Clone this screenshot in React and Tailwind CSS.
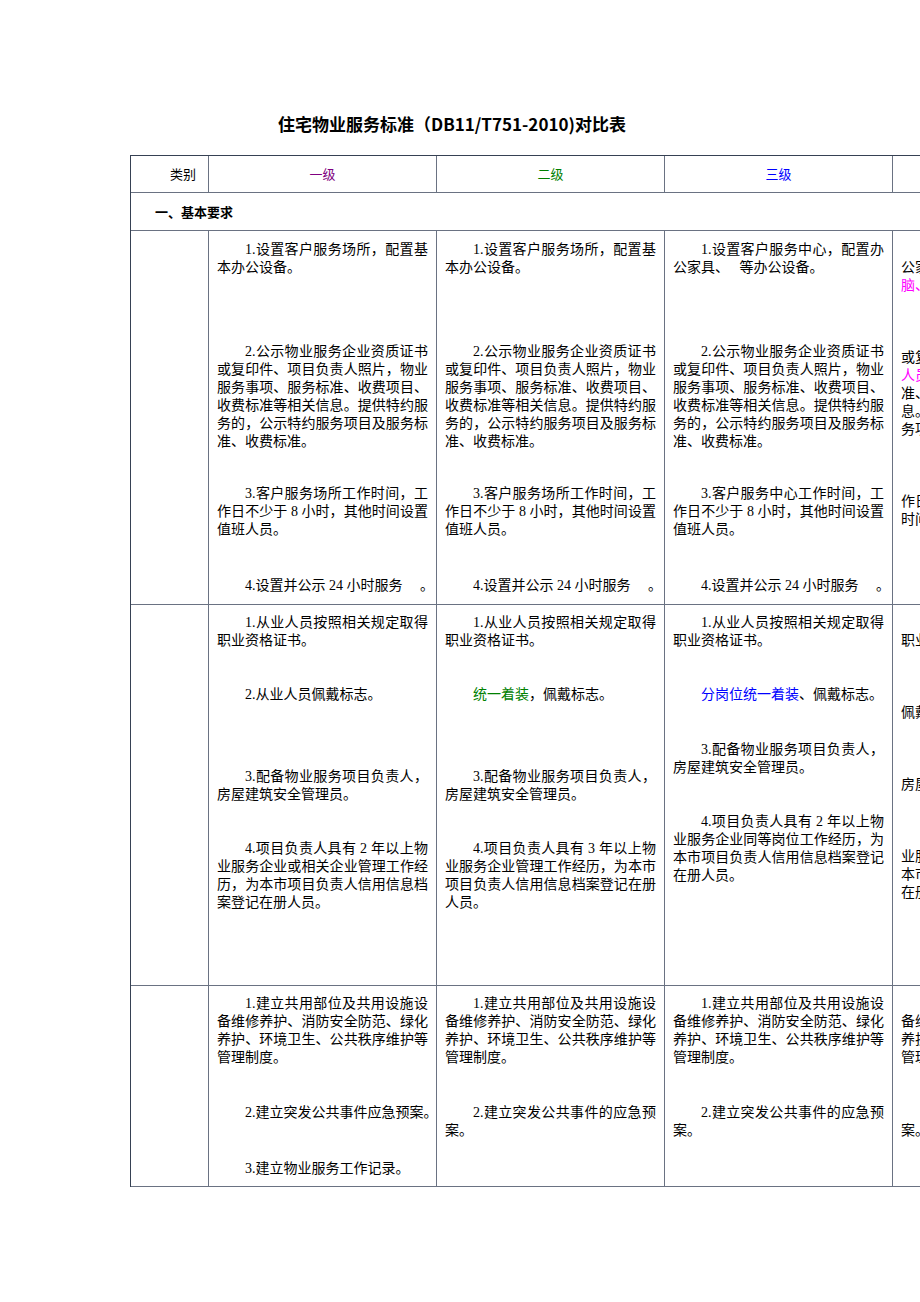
const serif = { fontFamily: '"Liberation Serif", "Noto Sans CJK SC", serif' };

function P({ mt, children, nowrap = false }) {
  return (
    <p className={`indent-[28px] text-justify ${nowrap ? 'whitespace-nowrap' : ''}`} style={{ marginTop: mt }}>
      {children}
    </p>
  );
}

function Lines({ mt, lines }) {
  return (
    <div style={{ marginTop: mt }}>
      {lines.map((l, i) => (
        <div key={i} className={`whitespace-nowrap h-[18px] ${i === 0 ? 'indent-[28px]' : ''}`}>{l || '\u00a0'}</div>
      ))}
    </div>
  );
}

function Row({ h, cells }) {
  return (
    <div className="flex border-b border-gray-500" style={{ height: h }}>
      <div className="w-[78px] shrink-0 border-r border-gray-500" />
      {cells.map((c, i) => (
        <div key={i} className="w-[228px] shrink-0 border-r border-gray-500 px-[8px] text-[14px] leading-[18px] text-black overflow-hidden" style={serif}>
          {c}
        </div>
      ))}
    </div>
  );
}

const pink = 'text-[#ff00ff]';

export default function App() {
  return (
    <div className="w-[920px] h-[1302px] overflow-hidden bg-white" style={{ fontFamily: '"Noto Sans CJK SC", sans-serif' }}>
      <h1 className="pt-[112px] pl-[278px] text-[17px] leading-[24px] font-bold text-black whitespace-nowrap">
        住宅物业服务标准（DB11/T751-2010)对比表
      </h1>
      <div className="ml-[130px] mt-[19px] w-[1000px] border-t border-l border-gray-700">
        <div className="flex h-[37px] border-b border-gray-500 text-[13px] items-center">
          <div className="w-[78px] h-full shrink-0 border-r border-gray-500 flex items-center justify-end pr-[12px]">类别</div>
          <div className="w-[228px] h-full shrink-0 border-r border-gray-500 flex items-center justify-center text-[#800080]">一级</div>
          <div className="w-[228px] h-full shrink-0 border-r border-gray-500 flex items-center justify-center text-[#008000]">二级</div>
          <div className="w-[228px] h-full shrink-0 border-r border-gray-500 flex items-center justify-center text-[#0000ff]">三级</div>
          <div className="w-[228px] h-full shrink-0 border-r border-gray-500 flex items-center justify-center text-[#ff00ff]">四级</div>
        </div>
        <div className="h-[38px] border-b border-gray-500 flex items-center pl-[24px] text-[13px] font-bold">一、基本要求</div>
        <Row
          h={374}
          cells={[
            <>
              <P mt={10}>1.设置客户服务场所，配置基本办公设备。</P>
              <P mt={66}>2.公示物业服务企业资质证书或复印件、项目负责人照片，物业服务事项、服务标准、收费项目、收费标准等相关信息。提供特约服务的，公示特约服务项目及服务标准、收费标准。</P>
              <P mt={34}>3.客户服务场所工作时间，工作日不少于 8 小时，其他时间设置值班人员。</P>
              <P mt={38} nowrap>4.设置并公示 24 小时服务　 。</P>
            </>,
            <>
              <P mt={10}>1.设置客户服务场所，配置基本办公设备。</P>
              <P mt={66}>2.公示物业服务企业资质证书或复印件、项目负责人照片，物业服务事项、服务标准、收费项目、收费标准等相关信息。提供特约服务的，公示特约服务项目及服务标准、收费标准。</P>
              <P mt={34}>3.客户服务场所工作时间，工作日不少于 8 小时，其他时间设置值班人员。</P>
              <P mt={38} nowrap>4.设置并公示 24 小时服务　 。</P>
            </>,
            <>
              <P mt={10}>1.设置客户服务中心，配置办公家具、　 等办公设备。</P>
              <P mt={66}>2.公示物业服务企业资质证书或复印件、项目负责人照片，物业服务事项、服务标准、收费项目、收费标准等相关信息。提供特约服务的，公示特约服务项目及服务标准、收费标准。</P>
              <P mt={34}>3.客户服务中心工作时间，工作日不少于 8 小时，其他时间设置值班人员。</P>
              <P mt={38} nowrap>4.设置并公示 24 小时服务　 。</P>
            </>,
            <>
              <Lines mt={10} lines={['', '公家具、电话、传真机、电', <span className={pink}>脑、复印机等办公设备。</span>]} />
              <Lines mt={36} lines={['', '或复印件、项目负责', <span className={pink}>人员照片、服务事项</span>, '准、收费项目、收费标准', '息。提供特约服务的，', '务项目及服务标准。']} />
              <Lines mt={36} lines={['', '作日不少于 10 小时', '时间设置值班人员。']} />
            </>,
          ]}
        />
        <Row
          h={381}
          cells={[
            <>
              <P mt={9}>1.从业人员按照相关规定取得职业资格证书。</P>
              <P mt={36}>2.从业人员佩戴标志。</P>
              <P mt={64}>3.配备物业服务项目负责人，房屋建筑安全管理员。</P>
              <P mt={36}>4.项目负责人具有 2 年以上物业服务企业或相关企业管理工作经历，为本市项目负责人信用信息档案登记在册人员。</P>
            </>,
            <>
              <P mt={9}>1.从业人员按照相关规定取得职业资格证书。</P>
              <P mt={36}><span className="text-[#008000]">统一着装</span>，佩戴标志。</P>
              <P mt={64}>3.配备物业服务项目负责人，房屋建筑安全管理员。</P>
              <P mt={36}>4.项目负责人具有 3 年以上物业服务企业管理工作经历，为本市项目负责人信用信息档案登记在册人员。</P>
            </>,
            <>
              <P mt={9}>1.从业人员按照相关规定取得职业资格证书。</P>
              <P mt={36}><span className="text-[#0000ff]">分岗位统一着装</span>、佩戴标志。</P>
              <P mt={37}>3.配备物业服务项目负责人，房屋建筑安全管理员。</P>
              <P mt={36}>4.项目负责人具有 2 年以上物业服务企业同等岗位工作经历，为本市项目负责人信用信息档案登记在册人员。</P>
            </>,
            <>
              <Lines mt={9} lines={['', '职业资格证书。']} />
              <Lines mt={36} lines={['', '佩戴标志。']} />
              <Lines mt={36} lines={['', '房屋建筑安全管理员。']} />
              <Lines mt={36} lines={['', '业服务企业管理工作', '本市项目负责人信用', '在册人员。']} />
            </>,
          ]}
        />
        <Row
          h={201}
          cells={[
            <>
              <P mt={9}>1.建立共用部位及共用设施设备维修养护、消防安全防范、绿化养护、环境卫生、公共秩序维护等管理制度。</P>
              <P mt={37} nowrap>2.建立突发公共事件应急预案。</P>
              <P mt={38}>3.建立物业服务工作记录。</P>
            </>,
            <>
              <P mt={9}>1.建立共用部位及共用设施设备维修养护、消防安全防范、绿化养护、环境卫生、公共秩序维护等管理制度。</P>
              <P mt={37}>2.建立突发公共事件的应急预案。</P>
            </>,
            <>
              <P mt={9}>1.建立共用部位及共用设施设备维修养护、消防安全防范、绿化养护、环境卫生、公共秩序维护等管理制度。</P>
              <P mt={37}>2.建立突发公共事件的应急预案。</P>
            </>,
            <>
              <Lines mt={9} lines={['', '备维修养护、消防安全', '养护、环境卫生、公共', '管理制度。']} />
              <Lines mt={37} lines={['', '案。']} />
            </>,
          ]}
        />
      </div>
    </div>
  );
}
